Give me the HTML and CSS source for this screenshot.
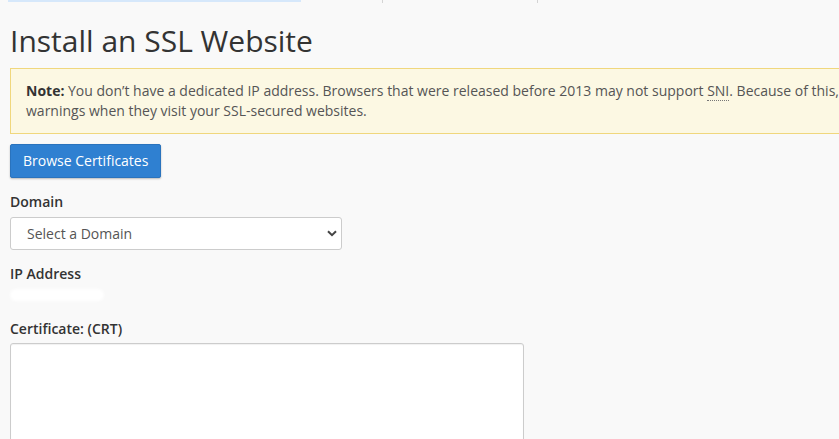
FILE: index.html
```html
<!DOCTYPE html>
<html>
<head>
<meta charset="utf-8">
<link rel="stylesheet" href="styles.css">
</head>
<body>
<div class="topstrip">
  <span class="strip-active"></span>
  <span class="strip-tick t1"></span>
  <span class="strip-tick t2"></span>
</div>
<main class="page">
  <h1 class="title">Install an SSL Website</h1>
  <div class="note">
    <strong>Note:</strong> You don’t have a dedicated IP address. Browsers that were released before 2013 may not support <abbr class="abbr" title="Server Name Indication">SNI</abbr>. Because of this, users may see<br>
    warnings when they visit your SSL-secured websites.
  </div>
  <button class="btn-primary" type="button">Browse Certificates</button>
  <div class="form-group">
    <label class="label">Domain</label>
    <div class="select-wrap">
      <div class="select">Select a Domain</div>
      <svg class="chevron" width="10" height="7" viewBox="0 0 10 7"><path d="M1 1.2 L5 5.2 L9 1.2" fill="none" stroke="#444" stroke-width="2"/></svg>
    </div>
  </div>
  <div class="form-group">
    <label class="label">IP Address</label>
    <div class="ip-row"><span class="ip-blur"></span></div>
  </div>
  <div class="form-group">
    <label class="label">Certificate: (CRT)</label>
    <div class="textarea"></div>
  </div>
</main>
</body>
</html>
```
FILE: styles.css
```css
html, body {
  margin: 0;
  padding: 0;
  background: #f9f9f9;
  overflow: hidden;
}
body {
  font-family: "Open Sans", "Noto Sans", sans-serif;
  font-size: 14px;
  line-height: 20px;
  color: #333;
  width: 839px;
  height: 439px;
}
.topstrip {
  height: 2px;
  display: flex;
  position: relative;
}
.strip-active {
  margin-left: 8px;
  width: 293px;
  height: 2px;
  background: #d6e8fb;
}
.strip-tick {
  position: absolute;
  top: 0;
  width: 1px;
  height: 3px;
  background: #d4d4d4;
}
.t1 { left: 382px; }
.t2 { left: 537px; }
.page {
  padding-left: 10px;
}
.title {
  margin: 22px 0 11px 0;
  font-size: 30px;
  line-height: 33px;
  font-weight: 400;
  color: #333;
}
.note {
  width: 900px;
  box-sizing: border-box;
  background: #fcf8e3;
  border: 1px solid #f0d77d;
  padding: 12px 15px;
  color: #555;
  white-space: nowrap;
}
.note strong { color: #333; font-weight: 700; }
.abbr {
  text-decoration: none;
  border-bottom: 1px dotted #777;
}
.btn-primary {
  display: block;
  margin-top: 10px;
  height: 34px;
  padding: 6px 12px;
  font-family: inherit;
  font-size: 14px;
  line-height: 20px;
  color: #fff;
  background: #2f80d1;
  border: 1px solid #2a73bd;
  border-radius: 2px;
  box-shadow: 0 1px 2px rgba(0,0,0,0.25);
}
.form-group {
  margin-top: 14px;
}
.label {
  display: block;
  font-weight: 600;
  color: #333;
  margin-bottom: 5px;
}
.select-wrap {
  position: relative;
  width: 332px;
}
.select {
  box-sizing: border-box;
  height: 33px;
  padding: 6px 16px;
  background: #fff;
  border: 1px solid #ccc;
  border-radius: 3px;
  color: #555;
}
.chevron {
  position: absolute;
  right: 5px;
  top: 13px;
}
.ip-row {
  height: 20px;
  display: flex;
  align-items: center;
  margin-top: -4px;
}
.ip-blur {
  width: 94px;
  height: 12px;
  background: #fff;
  border-radius: 6px;
  filter: blur(1.5px);
}
.cert-label {
  margin-bottom: 4px;
}
.textarea {
  box-sizing: border-box;
  width: 514px;
  height: 150px;
  margin-top: -1px;
  background: #fff;
  border: 1px solid #ccc;
  border-radius: 3px;
  box-shadow: inset 0 1px 1px rgba(0,0,0,0.06);
}
```
